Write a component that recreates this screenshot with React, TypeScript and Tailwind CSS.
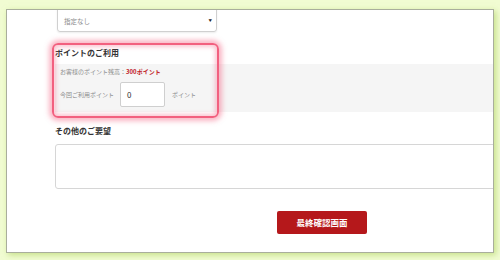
import React from "react";

const jp = { fontFamily: '"Noto Sans CJK JP", "Noto Sans", sans-serif' };

export default function App() {
  return (
    <div className="w-[500px] h-[260px] bg-[#f1fcd2] pt-[9px] pl-[6px] overflow-hidden" style={jp}>
      <div className="relative w-[488px] h-[244px] bg-white border border-[#a9ae9c] shadow-[2px_2px_6px_rgba(170,205,90,0.6)] overflow-hidden">
        <div className="flex flex-col">
          {/* select */}
          <div className="ml-[50px] -mt-[6px] w-[160px] h-[28px] border border-[#d0d0d0] rounded-[3px] shadow-[0_1px_2px_rgba(0,0,0,0.08)] flex items-center justify-between pl-[6px] pr-[4px] pt-[5px]">
            <span className="text-[6.5px] leading-[10px] text-[#8a8a8a]">指定なし</span>
            <span className="text-[3.5px] leading-[10px] text-[#222]">▼</span>
          </div>

          {/* point heading */}
          <div className="ml-[48px] mt-[15px] text-[8px] leading-[12px] font-bold text-[#333]">ポイントのご利用</div>

          {/* gray band */}
          <div className="ml-[48px] mt-[5px] h-[48px] bg-[#f5f5f5] pl-[5px] pt-[3px] flex flex-col">
            <div className="text-[6px] leading-[10px] text-[#8c8c8c] flex">
              <span>お客様のポイント残高：</span>
              <span className="font-bold text-[#c0161e]">300ポイント</span>
            </div>
            <div className="mt-[5px] flex items-center">
              <span className="text-[6px] leading-[10px] text-[#8c8c8c]">今回ご利用ポイント</span>
              <div className="ml-[6px] w-[45px] h-[25px] bg-white border border-[#cfcfcf] rounded-[2px] flex items-center pl-[6px] text-[8px] text-[#333]">0</div>
              <span className="ml-[7px] text-[6px] leading-[10px] text-[#8c8c8c]">ポイント</span>
            </div>
          </div>

          {/* other requests */}
          <div className="ml-[48px] mt-[13px] text-[8px] leading-[12px] font-bold text-[#333]">その他のご要望</div>
          <div className="ml-[48px] mt-[7px] w-[460px] h-[45px] border border-[#d6d6d6] rounded-[3px] bg-white"></div>

          {/* button */}
          <div className="ml-[270px] mt-[22px] w-[90px] h-[23px] bg-[#b5181b] rounded-[2px] flex items-center justify-center text-white text-[8.5px] font-bold">
            最終確認画面
          </div>
        </div>

        {/* highlight overlay */}
        <div className="absolute left-[45px] top-[33px] w-[167px] h-[75px] rounded-[6px] border-[2px] border-[#f2607f] shadow-[0_0_5px_3px_rgba(245,110,140,0.5),inset_0_0_4px_2px_rgba(245,110,140,0.4)]"></div>
      </div>
    </div>
  );
}
